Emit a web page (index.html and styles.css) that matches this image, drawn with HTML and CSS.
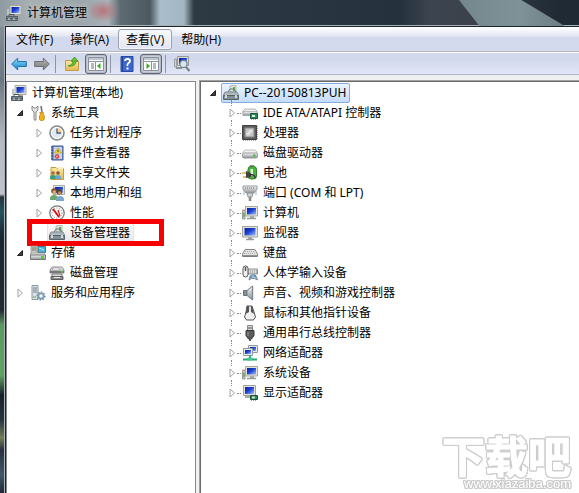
FILE: index.html
```html
<!DOCTYPE html>
<html lang="zh-CN">
<head>
<meta charset="utf-8">
<meta name="viewport" content="width=device-width, initial-scale=1">
<title>计算机管理</title>
<link rel="stylesheet" href="styles.css">
</head>
<body>
<svg class="sprite" aria-hidden="true">
  <defs>
    <linearGradient id="screen" x1="0" y1="0" x2="1" y2="1"><stop offset="0" stop-color="#0a1fa8"/><stop offset=".45" stop-color="#1c3fd0"/><stop offset="1" stop-color="#9fc0ff"/></linearGradient>
    <linearGradient id="metal" x1="0" y1="0" x2="0" y2="1"><stop offset="0" stop-color="#f6f7f7"/><stop offset="1" stop-color="#8d9397"/></linearGradient>
    <linearGradient id="blue" x1="0" y1="0" x2="0" y2="1"><stop offset="0" stop-color="#8adcf8"/><stop offset="1" stop-color="#1282cf"/></linearGradient>
    <linearGradient id="grey" x1="0" y1="0" x2="0" y2="1"><stop offset="0" stop-color="#b5b5b5"/><stop offset="1" stop-color="#777"/></linearGradient>
    <linearGradient id="folder" x1="0" y1="0" x2="0" y2="1"><stop offset="0" stop-color="#fbe9a8"/><stop offset="1" stop-color="#e5b94e"/></linearGradient>
    <symbol id="i-open" viewBox="0 0 12 12"><path d="M8.500 3.500v5h-5z" fill="#404040" stroke="#222" stroke-linejoin="round"/></symbol>
    <symbol id="i-closed" viewBox="0 0 12 12"><path d="M4 2l4.500 4L4 10z" fill="#fff" stroke="#a2a2a2"/></symbol>
    <symbol id="i-manage" viewBox="0 0 16 16"><path d="M4 .5h11v9H4z" fill="#e2e2d8" stroke="#aaa99b"/><path d="M5.500 2h8v6h-8z" fill="url(#screen)"/><path d="M8 10h4v2H8z" fill="#aaa"/><path d="M1 4h2v6H1z" fill="#b9c5cb"/><path d="M.5 11.500h11v4H.5z" fill="#77858c" stroke="#505e65"/><path d="M3 11v-1.500h5V11M1 13.500h10" fill="none" stroke="#4a575e"/><path d="M3 13v2M8 13v2" stroke="#dfe6e9"/></symbol>
    <symbol id="i-tools" viewBox="0 0 16 16"><path d="M2 1v4l2 2v7q0 2 2 1V7l2-2V1L6 3 4 3z" fill="#e4e4e4" stroke="#6e6e6e" stroke-width=".8"/><path d="M11 1l1 6" stroke="#777" stroke-width="1.600"/><path d="M9.800 7.500h3.500v2l1 1v4l-1.500 1h-2l-1.300-1v-4l1-1z" fill="#f2b21b" stroke="#bb7708" stroke-width=".7"/></symbol>
    <symbol id="i-clock" viewBox="0 0 16 16"><circle cx="8" cy="8" r="7" fill="#dce9f3" stroke="#85898c" stroke-width="1.600"/><path d="M8 8V2.500A5.500 5.500 0 0 1 13.500 8z" fill="#ffd08a"/><circle cx="8" cy="8" r="5.500" fill="none" stroke="#fff"/><path d="M8 3.500V8h4" fill="none" stroke="#4c6178" stroke-width="1.300"/></symbol>
    <symbol id="i-event" viewBox="0 0 16 16"><path d="M3 1h11v14H3z" fill="#7d9ace" stroke="#3c5695"/><path d="M5 2h8v12H5z" fill="#c4d4ef"/><path d="M2 2h2M2 5h2M2 8h2M2 11h2M2 14h2" stroke="#3d4662"/><path d="M9 3l3.500 5H5.500z" fill="#ffdf28" stroke="#bc8e10" stroke-width=".6"/><path d="M9 4.800V7" stroke="#333"/><circle cx="8" cy="11.500" r="2.300" fill="#d82c25"/><path d="M7 10.500l2 2m0-2l-2 2" stroke="#fff" stroke-width=".8"/></symbol>
    <symbol id="i-share" viewBox="0 0 16 16"><path d="M2 2.500h5l1 1h6.500v11H2z" fill="url(#folder)" stroke="#c89a3e"/><path d="M9 4h5V2H8" fill="#fff4c8"/><circle cx="4" cy="8" r="1.800" fill="#a6683b"/><circle cx="9" cy="8" r="1.800" fill="#7c5737"/><path d="M1 14v-2q0-2 3-2t3 2v2z" fill="#38a17c"/><path d="M6.500 14v-2q0-2 2.500-2t3 2v2z" fill="#65a9d2"/></symbol>
    <symbol id="i-users" viewBox="0 0 16 16"><path d="M4.500 .5h11v9h-11z" fill="#e3e2d8" stroke="#aaa"/><path d="M6 2h8v6H6z" fill="url(#screen)"/><circle cx="5" cy="6" r="2.800" fill="#825125"/><circle cx="5.300" cy="7" r="1.700" fill="#dcae7c"/><circle cx="10.500" cy="7" r="2.700" fill="#593e2a"/><circle cx="10.700" cy="8" r="1.700" fill="#c69064"/><path d="M1 14q0-4 4-4t4 4v1H1z" fill="#6ca66b"/><path d="M7 15q0-4 4-4t4 4v1H7z" fill="#7da6cd"/></symbol>
    <symbol id="i-perf" viewBox="0 0 16 16"><circle cx="8" cy="8" r="7.200" fill="#fff" stroke="#777" stroke-width="1.300"/><circle cx="8" cy="8" r="5" fill="none" stroke="#777" stroke-dasharray="1 1.500"/><path d="M4 4l6 8" stroke="#d21616" stroke-width="2"/><path d="M9 5l2 6" stroke="#d21616" stroke-width="1.200"/></symbol>
    <symbol id="i-device" viewBox="0 0 16 16"><path d="M7 1l6-1v7H7z" fill="#dfe4df" stroke="#98a099" stroke-width=".7"/><path d="M10 2h2v4h-2z" fill="#54b83b"/><path d="M5 7l2-3h4l2 3" fill="none" stroke="#68777c"/><path d="M2 7h12l2 4H0z" fill="#b0babd" stroke="#69767c" stroke-width=".7"/><path d="M.5 10.500h15v4H.5z" fill="#829096" stroke="#56646a"/><path d="M3 10v3m10-3v3" stroke="#eef2f3" stroke-width="1.500"/></symbol>
    <symbol id="i-storage" viewBox="0 0 16 16"><path d="M1 1h6v10H1z" fill="#cbc9b9" stroke="#8e8d7f" stroke-width=".8"/><path d="M2 3h4M2 5h4" stroke="#77786e"/><path d="M8 1.500h7.500v6H8z" fill="#45b3dc" stroke="#52717f"/><path d="M9 3l5 2" stroke="#b5edff"/><path d="M2 8h12l1.500 2H.5z" fill="#e4e7e7" stroke="#999" stroke-width=".6"/><path d="M.5 10h15v4.500H.5z" fill="url(#metal)" stroke="#777"/><path d="M11 11h3v3h-3z" fill="#55cd27"/></symbol>
    <symbol id="i-disk" viewBox="0 0 16 16"><path d="M3 2h10l2 3v3H1V5z" fill="url(#metal)" stroke="#777" stroke-width=".8"/><ellipse cx="7" cy="4" rx="4" ry="1.300" fill="#eee" stroke="#888" stroke-width=".5"/><path d="M1 6h14v2H1z" fill="#777"/><path d="M12 6h2v1.500h-2z" fill="#4fcc35"/><path d="M3 9h10v3H3z" fill="#ddd" stroke="#777"/><path d="M2 11.500h12v3H2z" fill="#8c8c8c" stroke="#5d5d5d"/><path d="M5 12.500h6" stroke="#eee"/></symbol>
    <symbol id="i-service" viewBox="0 0 16 16"><path d="M2 .5h6v14H2z" fill="#dce2e5" stroke="#8b989f"/><path d="M3 3h4M3 5h4M3 7h4" stroke="#73828a"/><path d="M3 12h3" stroke="#52b747"/><circle cx="11" cy="11" r="3.600" fill="#b8ccdd" stroke="#7794ad" stroke-width="2" stroke-dasharray="1.600 1.100"/><circle cx="11" cy="11" r="2.500" fill="#d4e2ed" stroke="#6c8ba6"/><circle cx="11" cy="11" r="1" fill="#fff"/></symbol>
    <symbol id="i-ide" viewBox="0 0 16 16"><path d="M3 4h10l2 2v4H1V6z" fill="#eee" stroke="#a2a2a2" stroke-width=".8"/><path d="M1 6.500h14v4H1z" fill="url(#metal)" stroke="#999" stroke-width=".6"/><path d="M8.500 8.500h7v5h-7z" fill="#2a8a58" stroke="#14583a"/><path d="M10 10h3v2h-3z" fill="#d5f3da"/><path d="M9 14.500h6" stroke="#c5a93a" stroke-dasharray="1 1"/></symbol>
    <symbol id="i-cpu" viewBox="0 0 16 16"><path d="M1 15.500h14M15.500 1v14" stroke="#c9a04b" stroke-dasharray="1 1"/><path d="M.5 .5h14v14H.5z" fill="#5a5a5a" stroke="#444"/><path d="M3 3h9v9H3z" fill="#c4c4c4" stroke="#888"/><path d="M5 10l5-5" stroke="#e2e2e2" stroke-width="3"/></symbol>
    <symbol id="i-drive" viewBox="0 0 16 16"><path d="M3 5h10l2 2v3H1V7z" fill="#f2f2f2" stroke="#b1b1b1" stroke-width=".8"/><rect x=".5" y="8" width="15" height="5" rx="1.500" fill="url(#metal)" stroke="#888" stroke-width=".8"/><path d="M11 9.500h2.500v2H11z" fill="#41bd31"/></symbol>
    <symbol id="i-battery" viewBox="0 0 16 16"><path d="M8 .5h4v2H8z" fill="#bbb" stroke="#666" stroke-width=".6"/><rect x="6" y="1.500" width="8.500" height="12.500" rx="3" fill="#49b53c" stroke="#367b29"/><path d="M8.500 4h2.500v7H8.500z" fill="#dcf6cd"/><path d="M0 8h4m-3 4h4" stroke="#d9b33e" stroke-width="1.300"/><path d="M4 6l5 2v4l-5 1z" fill="#444"/><path d="M8 10q5-1 5 3" fill="none" stroke="#333" stroke-width="1.400"/></symbol>
    <symbol id="i-port" viewBox="0 0 16 16"><path d="M1 1h14v3l-3 4H4L1 4z" fill="url(#metal)" stroke="#959a9d"/><path d="M3 3h10" stroke="#666" stroke-dasharray="1 1"/><path d="M5 8h6l-1 4H6z" fill="#cfd3d6" stroke="#8f9599"/><path d="M8 12v4" stroke="#888" stroke-width="2.500"/><path d="M2 5v5M14 5v5" stroke="#a9afb4"/></symbol>
    <symbol id="i-pc" viewBox="0 0 16 16"><path d="M.5 5h2.500v9H.5z" fill="#c6cbc6" stroke="#818881" stroke-width=".8"/><path d="M1 8h1.500v4H1z" fill="#53bc48"/><path d="M3.500 1.500h12v9.500h-12z" fill="#e4e4dc" stroke="#a7a79d"/><path d="M5 3h9v6.500H5z" fill="url(#screen)"/><path d="M8 11h4v2H8z" fill="#aaa"/><path d="M5 13.500h9" stroke="#999" stroke-width="1.500"/></symbol>
    <symbol id="i-monitor" viewBox="0 0 16 16"><path d="M.5 1.500h15v10.500H.5z" fill="#e2e2da" stroke="#a4a499"/><path d="M2.500 3h11v7.500h-11z" fill="url(#screen)"/><path d="M6 12h4v2H6z" fill="#aaa"/><path d="M4 14.500h8" stroke="#999" stroke-width="1.500"/></symbol>
    <symbol id="i-keyboard" viewBox="0 0 16 16"><path d="M3 4.500h10l2.500 4.500v2.500H.5V9z" fill="#e2e2e2" stroke="#8a8a8a"/><path d="M3 6.500h10M2 8.500h12" stroke="#aaa" stroke-dasharray="1 1"/><path d="M1 11h14" stroke="#777" stroke-width="1.500"/></symbol>
    <symbol id="i-hid" viewBox="0 0 16 16"><path d="M5 4h10.500v5H5z" fill="#ddd" stroke="#8c9296"/><path d="M6 6h9M6 8h9" stroke="#888" stroke-dasharray="1 1"/><rect x="1" y="1" width="5" height="11" rx="2.500" fill="#f0f0f0" stroke="#555"/><path d="M3.500 2v4" stroke="#555" stroke-width="1.500"/><path d="M7 15l1-4q3-3 6 0l1.500 4-3-1.500h-3z" fill="#a8bed2" stroke="#62788d" stroke-width=".8"/><path d="M9 11v2m3-2h2" stroke="#2a75bd"/></symbol>
    <symbol id="i-sound" viewBox="0 0 16 16"><path d="M1.500 5.500H5v5H1.500z" fill="#818f97" stroke="#66737a"/><path d="M5 5.500L10.500 1v14L5 10.500z" fill="url(#metal)" stroke="#77848b"/><path d="M10.500 1v14" stroke="#7b878e" stroke-width="1.300"/></symbol>
    <symbol id="i-mouse" viewBox="0 0 16 16"><path d="M5 1h5l2 6 1.500 5-2 3h-7l-2-3L4 7z" fill="#efefef" stroke="#555"/><path d="M5 1l-1.500 8L7 7V1m3 0l2 8-3-2V1" fill="#555"/><path d="M8 2v4" stroke="#ddd" stroke-width="1.300"/></symbol>
    <symbol id="i-usb" viewBox="0 0 16 16"><path d="M5.500 .5h5V6h-5z" fill="#d6d6d6" stroke="#888"/><path d="M7 2v2m2-2v2" stroke="#555"/><path d="M4 5.500h8v5L9.500 14h-3L4 10.500z" fill="#5b5b5b" stroke="#383838"/><path d="M8 14v2" stroke="#555" stroke-width="2"/><path d="M6 7v4" stroke="#999"/></symbol>
    <symbol id="i-network" viewBox="0 0 16 16"><path d="M6.500 .5h9v7h-9z" fill="#e7e9e9" stroke="#939a9e"/><path d="M8 2h6v4H8z" fill="url(#screen)"/><path d="M1.500 3.500h9v7h-9z" fill="#e7e9e9" stroke="#939a9e"/><path d="M3 5h6v4H3z" fill="url(#screen)"/><path d="M8 10v4M1 14.500h14" stroke="#28a775" stroke-width="1.800"/><path d="M5.500 12.500h5v3h-5z" fill="#3fc890"/></symbol>
    <symbol id="i-display" viewBox="0 0 16 16"><path d="M1.500 .5h12v10h-12z" fill="#e4e4dc" stroke="#a2a29a"/><path d="M3 2h9v7H3z" fill="url(#screen)"/><path d="M3 12h6" stroke="#aaa" stroke-width="2"/><path d="M8.500 10.500h7v4h-7z" fill="#25885a" stroke="#155336"/><path d="M10 11.500h3v2h-3z" fill="#c9e7ce"/><path d="M9 15.500h5" stroke="#c5a23c" stroke-dasharray="1 1"/></symbol>
    <symbol id="i-back" viewBox="0 0 16 16"><path d="M.7 8l6-6v3.500h8.600v5H6.700V14z" fill="url(#blue)" stroke="#2471a5"/></symbol>
    <symbol id="i-forward" viewBox="0 0 16 16"><path d="M15.300 8l-6-6v3.500H.7v5h8.600V14z" fill="url(#grey)" stroke="#6f6f6f"/></symbol>
    <symbol id="i-up" viewBox="0 0 16 16"><path d="M1.500 4.500h5l1 1h7v9h-13z" fill="url(#folder)" stroke="#c59b47"/><path d="M4 10q5-1 5-5H7l3.500-4L14 5h-2q0 6-8 5z" fill="#5fc52c" stroke="#32881b" stroke-width=".7"/></symbol>
    <symbol id="i-left" viewBox="0 0 16 16"><path d="M.5 1.500h15v13H.5z" fill="#fff" stroke="#87909b"/><path d="M1 2h14v2H1z" fill="#bfc7d2"/><path d="M1 5.500h14M7.500 6v8" stroke="#8c949d"/><path d="M3 8h3M3 10h3M3 12h3" stroke="#6d7780"/><path d="M12.500 7v6L9 10z" fill="#37aa24"/></symbol>
    <symbol id="i-right" viewBox="0 0 16 16"><path d="M.5 1.500h15v13H.5z" fill="#fff" stroke="#87909b"/><path d="M1 2h14v2H1z" fill="#bfc7d2"/><path d="M1 5.500h14M8.500 6v8" stroke="#8c949d"/><path d="M10 8h3M10 10h3M10 12h3" stroke="#6d7780"/><path d="M3.500 7v6L7 10z" fill="#37aa24"/></symbol>
    <symbol id="i-help" viewBox="0 0 16 16"><path d="M2 .5h12v15H2z" fill="#3c67cd" stroke="#2549a4"/><path d="M3.500 1v14" stroke="#234499"/><path d="M6 5q0-2 2.500-2T11 5q0 1-1.500 2T8.500 10" fill="none" stroke="#fff" stroke-width="1.800"/><path d="M7.500 11.500h2v2h-2z" fill="#fff"/></symbol>
    <symbol id="i-scan" viewBox="0 0 16 16"><path d="M.5 3h2v8h-2z" fill="#ccd3d2" stroke="#888" stroke-width=".7"/><path d="M3.500 .5h11v9h-11z" fill="#ddddd4" stroke="#999"/><path d="M5 2h8v6H5z" fill="url(#screen)"/><path d="M2 12h6" stroke="#8c9498" stroke-width="2"/><circle cx="9.500" cy="8" r="3.600" fill="#d5e6f2" stroke="#75838c" stroke-width="1.200"/><path d="M12 11l3.500 4" stroke="#747d83" stroke-width="2"/></symbol>
  </defs>
</svg>

<div class="window">
  <header class="titlebar">
    <svg class="icon"><use href="#i-manage"/></svg>
    <h1 class="title">计算机管理</h1>
  </header>
  <div class="client">
    <nav class="menubar">
      <button class="menu">文件(F)</button>
      <button class="menu">操作(A)</button>
      <button class="menu menu-hot">查看(V)</button>
      <button class="menu">帮助(H)</button>
    </nav>
    <div class="toolbar">
      <button class="tool" aria-label="后退"><svg class="icon"><use href="#i-back"/></svg></button>
      <button class="tool" aria-label="前进"><svg class="icon"><use href="#i-forward"/></svg></button>
      <span class="divider"></span>
      <button class="tool" aria-label="向上"><svg class="icon"><use href="#i-up"/></svg></button>
      <button class="tool tool-on" aria-label="显示控制台树"><svg class="icon"><use href="#i-left"/></svg></button>
      <span class="divider"></span>
      <button class="tool" aria-label="帮助"><svg class="icon"><use href="#i-help"/></svg></button>
      <button class="tool tool-on" aria-label="显示操作窗格"><svg class="icon"><use href="#i-right"/></svg></button>
      <span class="divider"></span>
      <button class="tool" aria-label="扫描"><svg class="icon"><use href="#i-scan"/></svg></button>
    </div>
    <main class="panes">
      <ul class="pane tree console">
        <li>
          <div class="row row-root"><svg class="icon"><use href="#i-manage"/></svg><span class="label">计算机管理(本地)</span></div>
          <ul class="tree">
            <li>
              <div class="row"><button class="twisty" aria-label="折叠"><svg><use href="#i-open"/></svg></button><svg class="icon"><use href="#i-tools"/></svg><span class="label">系统工具</span></div>
              <ul class="tree branch">
                <li class="row"><button class="twisty" aria-label="展开"><svg><use href="#i-closed"/></svg></button><svg class="icon"><use href="#i-clock"/></svg><span class="label">任务计划程序</span></li>
                <li class="row"><button class="twisty" aria-label="展开"><svg><use href="#i-closed"/></svg></button><svg class="icon"><use href="#i-event"/></svg><span class="label">事件查看器</span></li>
                <li class="row"><button class="twisty" aria-label="展开"><svg><use href="#i-closed"/></svg></button><svg class="icon"><use href="#i-share"/></svg><span class="label">共享文件夹</span></li>
                <li class="row"><button class="twisty" aria-label="展开"><svg><use href="#i-closed"/></svg></button><svg class="icon"><use href="#i-users"/></svg><span class="label">本地用户和组</span></li>
                <li class="row"><button class="twisty" aria-label="展开"><svg><use href="#i-closed"/></svg></button><svg class="icon"><use href="#i-perf"/></svg><span class="label">性能</span></li>
                <li class="row marked"><span class="twisty"></span><span class="item item-idle"><svg class="icon"><use href="#i-device"/></svg><span class="label">设备管理器</span></span></li>
              </ul>
            </li>
            <li>
              <div class="row"><button class="twisty" aria-label="折叠"><svg><use href="#i-open"/></svg></button><svg class="icon"><use href="#i-storage"/></svg><span class="label">存储</span></div>
              <ul class="tree branch">
                <li class="row"><span class="twisty"></span><svg class="icon"><use href="#i-disk"/></svg><span class="label">磁盘管理</span></li>
              </ul>
            </li>
            <li class="row"><button class="twisty" aria-label="展开"><svg><use href="#i-closed"/></svg></button><svg class="icon"><use href="#i-service"/></svg><span class="label">服务和应用程序</span></li>
          </ul>
        </li>
      </ul>
      <ul class="pane tree devices">
        <li>
          <div class="row"><button class="twisty" aria-label="折叠"><svg><use href="#i-open"/></svg></button><span class="item item-selected"><svg class="icon"><use href="#i-device"/></svg><span class="label">PC--20150813PUH</span></span></div>
          <ul class="tree branch lined">
            <li class="row"><button class="twisty" aria-label="展开"><svg><use href="#i-closed"/></svg></button><svg class="icon"><use href="#i-ide"/></svg><span class="label">IDE ATA/ATAPI 控制器</span></li>
            <li class="row"><button class="twisty" aria-label="展开"><svg><use href="#i-closed"/></svg></button><svg class="icon"><use href="#i-cpu"/></svg><span class="label">处理器</span></li>
            <li class="row"><button class="twisty" aria-label="展开"><svg><use href="#i-closed"/></svg></button><svg class="icon"><use href="#i-drive"/></svg><span class="label">磁盘驱动器</span></li>
            <li class="row"><button class="twisty" aria-label="展开"><svg><use href="#i-closed"/></svg></button><svg class="icon"><use href="#i-battery"/></svg><span class="label">电池</span></li>
            <li class="row"><button class="twisty" aria-label="展开"><svg><use href="#i-closed"/></svg></button><svg class="icon"><use href="#i-port"/></svg><span class="label">端口 (COM 和 LPT)</span></li>
            <li class="row"><button class="twisty" aria-label="展开"><svg><use href="#i-closed"/></svg></button><svg class="icon"><use href="#i-pc"/></svg><span class="label">计算机</span></li>
            <li class="row"><button class="twisty" aria-label="展开"><svg><use href="#i-closed"/></svg></button><svg class="icon"><use href="#i-monitor"/></svg><span class="label">监视器</span></li>
            <li class="row"><button class="twisty" aria-label="展开"><svg><use href="#i-closed"/></svg></button><svg class="icon"><use href="#i-keyboard"/></svg><span class="label">键盘</span></li>
            <li class="row"><button class="twisty" aria-label="展开"><svg><use href="#i-closed"/></svg></button><svg class="icon"><use href="#i-hid"/></svg><span class="label">人体学输入设备</span></li>
            <li class="row"><button class="twisty" aria-label="展开"><svg><use href="#i-closed"/></svg></button><svg class="icon"><use href="#i-sound"/></svg><span class="label">声音、视频和游戏控制器</span></li>
            <li class="row"><button class="twisty" aria-label="展开"><svg><use href="#i-closed"/></svg></button><svg class="icon"><use href="#i-mouse"/></svg><span class="label">鼠标和其他指针设备</span></li>
            <li class="row"><button class="twisty" aria-label="展开"><svg><use href="#i-closed"/></svg></button><svg class="icon"><use href="#i-usb"/></svg><span class="label">通用串行总线控制器</span></li>
            <li class="row"><button class="twisty" aria-label="展开"><svg><use href="#i-closed"/></svg></button><svg class="icon"><use href="#i-network"/></svg><span class="label">网络适配器</span></li>
            <li class="row"><button class="twisty" aria-label="展开"><svg><use href="#i-closed"/></svg></button><svg class="icon"><use href="#i-pc"/></svg><span class="label">系统设备</span></li>
            <li class="row"><button class="twisty" aria-label="展开"><svg><use href="#i-closed"/></svg></button><svg class="icon"><use href="#i-display"/></svg><span class="label">显示适配器</span></li>
          </ul>
        </li>
      </ul>
    </main>
  </div>
</div>
<div class="watermark">
  <span class="watermark-name">下载吧</span>
  <span class="watermark-url">www.xiazaiba.com</span>
</div>
</body>
</html>
```
FILE: styles.css
```css
*, *::before, *::after { box-sizing: border-box; }

body {
  margin: 0;
  color: #000;
  font: 12px/20px "Open Sans", "Noto Sans CJK SC", sans-serif;
}

button {
  margin: 0;
  padding: 0;
  border: 0;
  background: none;
  color: inherit;
  font: inherit;
}

ul { margin: 0; padding: 0; list-style: none; }

.sprite { position: absolute; width: 0; height: 0; }

.icon { flex: none; display: block; width: 16px; height: 16px; }

/* Glass frame: the title strip over the left edge */
.window {
  display: flex;
  flex-direction: column;
  min-height: 100vh;
  padding-left: 5px;
  background:
    radial-gradient(ellipse at center, #b8757b 0, transparent 70%) 86px 0 / 34px 22px no-repeat,
    linear-gradient(90deg, #8f9ba1 0, #a7b0b4 30px, #9aa4a9 80px, #a8b3b8 108px, #606c74 120px, #4d5961 150px, #a9bdca 160px, #a3b6c3 184px, #2d3943 194px, #25323e 400px, #3c444f 430px, #3b424c 470px, #1f2a34 560px) 0 0 / 100% 27px no-repeat,
    linear-gradient(180deg, #8e9ba3 0, #6c7881 80px, #b4bac0 140px, #c0c4ca 194px, #26333d 197px, #235361 212px, #1b2831 235px, #202a33 310px, #5c9960 325px, #62a262 375px, #17212a 395px, #27343f 420px, #777b55 438px, #26313c 450px, #43566b 475px, #1f2933 493px);
}

.titlebar {
  position: relative;
  display: flex;
  align-items: center;
  gap: 5px;
  height: 26px;
  padding-left: 1px;
}

/* Slanted reflection in the glass */
.titlebar::after {
  content: "";
  position: absolute;
  inset: 0 0 0 auto;
  width: 120px;
  background: linear-gradient(90deg, #74878d, #7f9297 50%, #66787d);
  clip-path: polygon(0 0, 52% 0, 88% 100%, 17% 100%);
}

.title { margin: 0; font-size: 12px; font-weight: 400; text-shadow: 0 0 6px #dce4e8; }

.client {
  flex: 1;
  display: flex;
  flex-direction: column;
  border: solid #1b232b;
  border-width: 1px 0 0 1px;
  outline: 1px solid #a9b1b5;
  background: #f0f0f0;
}

.menubar {
  display: flex;
  gap: 1px;
  height: 25px;
  padding: 2px 0 1px 2px;
  border-bottom: 1px solid #b3b6c3;
  background: linear-gradient(#fff 0, #e4e8f3 9px, #d4daed 10px);
}

.menu { padding: 0 7px; border: 1px solid transparent; border-radius: 3px; }

.menu-hot {
  border-color: #9da1ad;
  background: linear-gradient(#f9fafd, #e1e5f1);
  box-shadow: inset 0 0 0 1px #f3f5fa;
}

.toolbar {
  display: flex;
  align-items: center;
  gap: 3px;
  height: 23px;
  padding-left: 3px;
  border-top: 1px solid #fff;
  border-bottom: 1px solid #b0b4c8;
  background: linear-gradient(#d3d9ec 30%, #e1e6f6);
}

.tool { display: grid; place-items: center; width: 20px; height: 20px; }

.tool-on { width: 22px; border: 1px solid #62676f; border-radius: 3px; background: #cfd4e2; box-shadow: inset 0 0 2px #777; }

.divider { width: 1px; height: 18px; margin-right: 3px; background: #8f95a4; }

.panes {
  flex: 1;
  display: grid;
  grid-template-columns: 190px 1fr;
  gap: 4px;
  padding-top: 6px;
}

.pane { padding-top: 1px; background: #fff; }

.console { border: solid #83888f; border-width: 1px 1px 0; }

.devices {
  padding-left: 6px;
  border: solid #6b6b6b;
  border-width: 1px 0 0 1px;
  outline: 1px solid #a0a0a0;
  font-family: "Noto Sans", "Noto Sans CJK SC", sans-serif;
}

.console .row { padding-left: 7px; }
.console .row-root { padding-left: 4px; }
.branch { padding-left: 19px; }

.row { position: relative; display: flex; align-items: center; height: 20px; white-space: nowrap; }

.twisty { flex: none; width: 12px; height: 12px; margin-right: 4px; }
.twisty svg { display: block; width: 12px; height: 12px; }

.label { margin-left: 5px; }

.item { display: flex; align-items: center; height: 20px; margin-left: -2px; padding: 0 3px 0 1px; border: 1px solid; border-radius: 2px; }

.item-idle { border-color: #e3e3e3; background: linear-gradient(#fafafa, #e8e8e8); }

.item-selected { border-color: #84acdd; background: linear-gradient(#ebf4fd, #c4dcfa); }

/* Dotted connectors between device classes */
.lined .row::before {
  content: "";
  position: absolute;
  left: 5px;
  top: -3px;
  height: 6px;
  border-left: 1px dotted #888;
}

.lined .row::after {
  content: "";
  position: absolute;
  left: 11px;
  top: 10px;
  width: 4px;
  border-top: 1px dotted #888;
}

.marked::after {
  content: "";
  position: absolute;
  left: 1px;
  top: -4px;
  width: 137px;
  height: 27px;
  border: 5px solid #f60000;
}

.watermark {
  position: fixed;
  right: 8px;
  bottom: 3px;
  display: flex;
  flex-direction: column;
  align-items: flex-end;
  gap: 1px;
  color: #fff;
  font-weight: 700;
  filter: drop-shadow(1px 0 #ccc) drop-shadow(-1px 0 #ccc) drop-shadow(0 1px #ccc) drop-shadow(0 -1px #ccc);
}

.watermark-name { font: 700 43px/46px "Noto Sans CJK SC", sans-serif; -webkit-text-stroke: 1px #fff; }

.watermark-url { font: 400 13px/12px "Liberation Sans", sans-serif; }
```
